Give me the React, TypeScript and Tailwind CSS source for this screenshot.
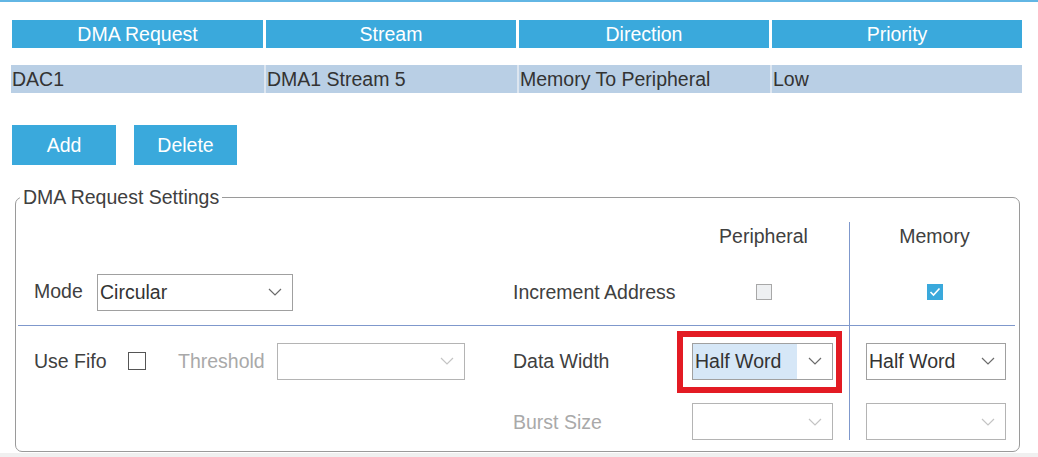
import React from "react";

const columns = [
  { title: "DMA Request", value: "DAC1", w: "w-[251px]" },
  { title: "Stream", value: "DMA1 Stream 5", w: "w-[250px]" },
  { title: "Direction", value: "Memory To Peripheral", w: "w-[250px]" },
  { title: "Priority", value: "Low", w: "w-[250px]" },
];

function Chevron({ muted }: { muted?: boolean }) {
  return (
    <svg width="14" height="8" viewBox="0 0 14 8" className="shrink-0">
      <path
        d="M1 1 L7 7 L13 1"
        fill="none"
        stroke={muted ? "#c4c4c4" : "#6b6b6b"}
        strokeWidth="1.2"
      />
    </svg>
  );
}

function Select({
  value,
  width,
  muted,
  highlight,
}: {
  value?: string;
  width: string;
  muted?: boolean;
  highlight?: boolean;
}) {
  return (
    <div
      className={`${width} h-[37px] border ${
        muted ? "border-[#b4b4b4]" : "border-[#a0a0a0]"
      } bg-white flex items-center justify-between pr-[10px]`}
    >
      {value ? (
        <span
          className={`h-full flex items-center pl-[2px] pr-[16px] pt-px text-[#333] ${
            highlight ? "bg-[#d6e7f7]" : ""
          }`}
        >
          {value}
        </span>
      ) : (
        <span />
      )}
      <Chevron muted={muted} />
    </div>
  );
}

export default function App() {
  return (
    <div className="w-[1038px] h-[457px] bg-white flex flex-col overflow-hidden font-['Liberation_Sans','Arial',sans-serif] text-[19.5px] text-[#404040]">
      <div className="h-[2px] bg-[#62b6e4]" />

      {/* table */}
      <div className="pl-[12px] pt-[18px]">
        <div className="flex gap-[3px] h-[28px]">
          {columns.map((c) => (
            <div
              key={c.title}
              className={`${c.w} bg-[#3aa9dc] text-white flex items-center justify-center pt-[2px]`}
            >
              {c.title}
            </div>
          ))}
        </div>
        <div className="flex h-[28px] mt-[17px] -ml-px w-[1011px] bg-[#b9cfe5]">
          {columns.map((c, i) => (
            <div
              key={c.title}
              className={`w-[253px] ${
                i > 0 ? "border-l-2 border-[#dde6f0]" : ""
              } flex items-center pl-px pt-[2px] text-[#333] last:flex-1`}
            >
              {c.value}
            </div>
          ))}
        </div>

        {/* buttons */}
        <div className="flex gap-[18px] mt-[32px]">
          <button className="w-[104px] h-[40px] pt-[2px] bg-[#3aa9dc] text-white">Add</button>
          <button className="w-[103px] h-[40px] pt-[2px] bg-[#3aa9dc] text-white">Delete</button>
        </div>
      </div>

      {/* settings */}
      <fieldset className="ml-[15px] mt-[20px] w-[1005px] h-[267px] border border-[#9a9a9a] rounded-[7px]">
        <legend className="ml-[4px] px-[3px] leading-[24px]">DMA Request Settings</legend>

        <div className="pt-[13px]">
          {/* top section */}
          <div className="flex">
            <div className="w-[481px]">
              <div className="h-[28px]" />
              <div className="h-[75px] pt-[9px] pl-[18px] flex items-center">
                <span className="w-[63px]">Mode</span>
                <Select value="Circular" width="w-[196px]" />
              </div>
            </div>
            <div className="w-[181px]">
              <div className="h-[28px]" />
              <div className="h-[75px] pt-[10px] pl-[16px] flex items-center whitespace-nowrap">
                Increment Address
              </div>
            </div>
            <div className="w-[171px]">
              <div className="h-[28px] pt-[2px] flex items-center justify-center">Peripheral</div>
              <div className="h-[75px] pt-[8px] flex items-center justify-center">
                <div className="w-[16px] h-[16px] border border-[#a8a8a8] bg-[#eef0f2]" />
              </div>
            </div>
            <div className="flex-1 border-l border-[#7f98cc]">
              <div className="h-[28px] pt-[2px] flex items-center justify-center">Memory</div>
              <div className="h-[75px] pt-[8px] flex items-center justify-center">
                <div className="w-[16px] h-[16px] bg-[#3aa9dc] flex items-center justify-center">
                  <svg width="12" height="10" viewBox="0 0 12 10">
                    <path d="M1.5 5 L4.5 8 L10.5 1.5" fill="none" stroke="white" strokeWidth="1.6" />
                  </svg>
                </div>
              </div>
            </div>
          </div>

          <div className="h-px bg-[#7f98cc] ml-[2px] mr-[4px]" />

          {/* bottom section */}
          <div className="flex">
            <div className="w-[481px]">
              <div className="h-[70px] pl-[18px] flex items-center">
                <span className="w-[94px] pt-[2px]">Use Fifo</span>
                <div className="w-[18px] h-[18px] border-[1.5px] border-[#555]" />
                <span className="ml-[32px] w-[99px] pt-[2px] text-[#a9a9a9]">Threshold</span>
                <Select width="w-[188px]" muted />
              </div>
              <div className="h-[44px]" />
            </div>
            <div className="w-[181px]">
              <div className="h-[70px] pl-[16px] pt-[2px] flex items-center">Data Width</div>
              <div className="h-[44px] pt-[9px] pl-[16px] flex items-center text-[#a9a9a9]">
                Burst Size
              </div>
            </div>
            <div className="w-[171px]">
              <div className="h-[70px] pl-[14px] flex items-center">
                <div className="relative">
                  <Select value="Half Word" width="w-[141px]" highlight />
                  <div className="absolute -left-[15px] -right-[9px] -top-[12px] -bottom-[13px] border-[6px] border-[#e31b23] pointer-events-none" />
                </div>
              </div>
              <div className="h-[44px] pt-[7px] pl-[14px] flex items-start">
                <Select width="w-[141px]" muted />
              </div>
            </div>
            <div className="flex-1 border-l border-[#7f98cc]">
              <div className="h-[70px] pl-[16px] flex items-center">
                <Select value="Half Word" width="w-[140px]" />
              </div>
              <div className="h-[44px] pt-[7px] pl-[16px] flex items-start">
                <Select width="w-[140px]" muted />
              </div>
            </div>
          </div>
        </div>
      </fieldset>

      <div className="flex-1 bg-[#f0f0f0] mt-[1px]" />
    </div>
  );
}
